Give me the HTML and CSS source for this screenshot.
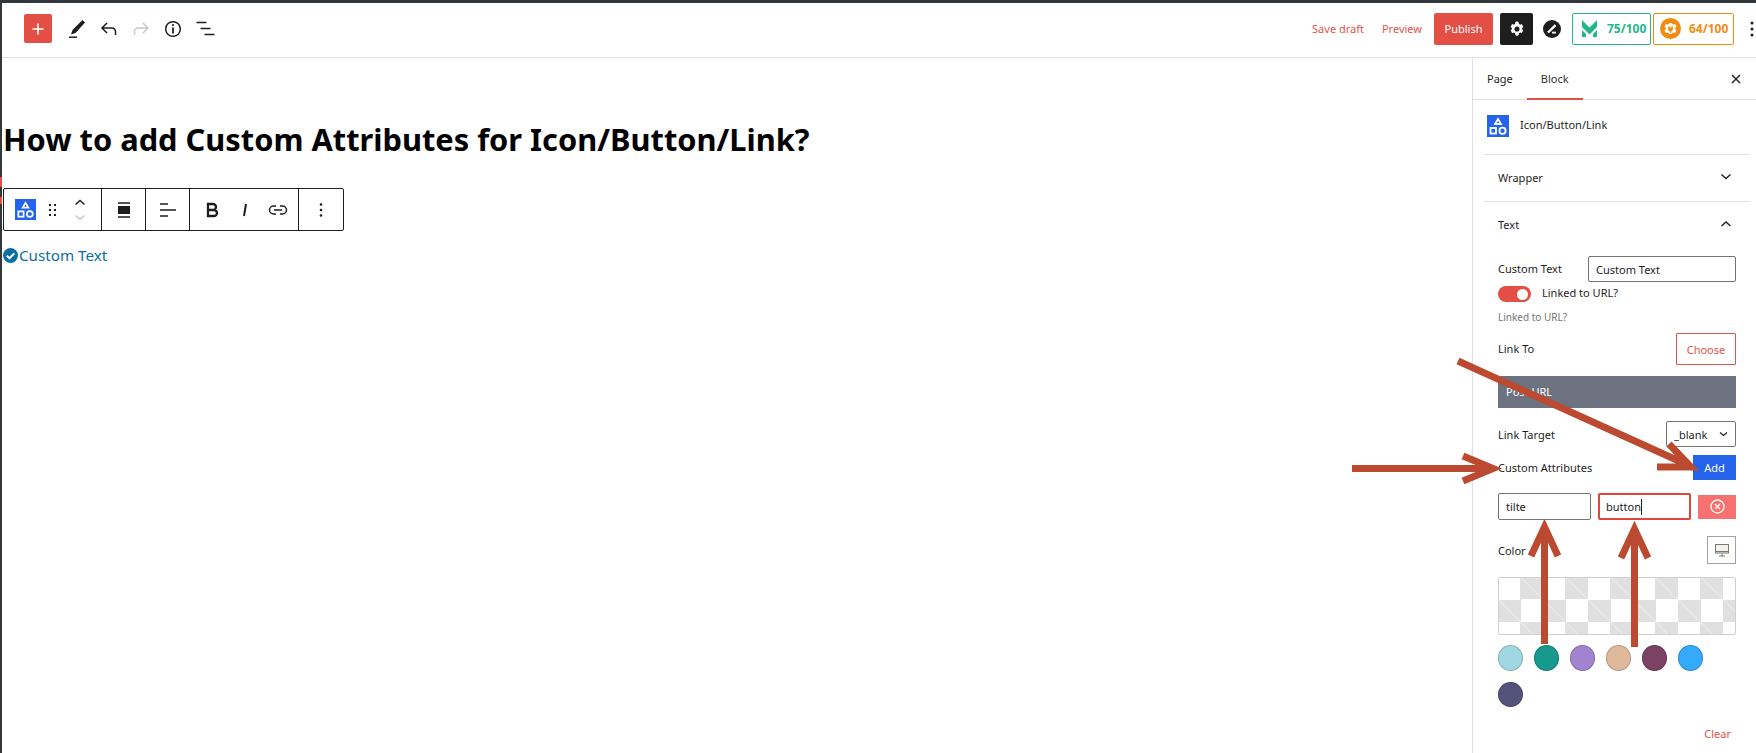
FILE: index.html
```html
<!DOCTYPE html>
<html lang="en">
<head>
<meta charset="utf-8">
<title>How to add Custom Attributes</title>
<link rel="stylesheet" href="styles.css">
</head>
<body>
<div class="topline"></div>
<div class="app">
<header class="bar">
  <div class="bar-left">
    <button class="add"><svg width="16" height="16" viewBox="0 0 16 16"><path d="M8 2.500v11M2.500 8h11" stroke="#fff" stroke-width="1.600"/></svg></button>
    <svg class="ic" width="24" height="24" viewBox="0 0 24 24"><path d="M20 5.500l-2.600-2.600L7.500 13 6 17.500l4.500-1.500z" fill="#1e1e1e"/><path d="M4 20.200h8" stroke="#1e1e1e" stroke-width="1.500"/></svg>
    <svg class="ic" width="24" height="24" viewBox="0 0 24 24"><path d="M18.500 18v-3.500a3.500 3.500 0 0 0-3.500-3.500H5.500M10 6l-5 5 5 5" fill="none" stroke="#1e1e1e" stroke-width="1.500"/></svg>
    <svg class="ic" width="24" height="24" viewBox="0 0 24 24"><path d="M5.500 18v-3.500a3.500 3.500 0 0 1 3.500-3.500h9.500M14 6l5 5-5 5" fill="none" stroke="#c8c8c8" stroke-width="1.500"/></svg>
    <svg class="ic" width="24" height="24" viewBox="0 0 24 24"><circle cx="12" cy="12" r="7.300" fill="none" stroke="#1e1e1e" stroke-width="1.500"/><path d="M12 10.500V16.500" stroke="#1e1e1e" stroke-width="1.800"/><circle cx="12" cy="8" r="1.100" fill="#1e1e1e"/></svg>
    <svg class="ic lastic" width="24" height="24" viewBox="0 0 24 24"><path d="M3 6h10M7 12h10M11 18h10" stroke="#1e1e1e" stroke-width="1.600" transform="translate(-.5 -.5)"/></svg>
  </div>
  <div class="bar-right">
    <a class="link draft">Save draft</a>
    <a class="link preview">Preview</a>
    <button class="publish">Publish</button>
    <button class="gear"><svg width="18" height="18" viewBox="0 0 24 24"><path fill="#fff" fill-rule="evenodd" d="M12 1.800l2.200 1.300 .4 2.200 1.600.9 2.100-.8 2.200 3.800-1.700 1.400v1.800l1.700 1.400-2.200 3.800-2.100-.8-1.600.9-.4 2.200-2.200 1.300-2.200-1.300-.4-2.200-1.600-.9-2.100.8-2.200-3.800 1.700-1.400v-1.800L3.300 9.200l2.200-3.800 2.100.8 1.600-.9.4-2.200zM12 8.600a3.400 3.400 0 1 0 0 6.800 3.400 3.400 0 0 0 0-6.800z"/></svg></button>
    <svg class="zlogo" width="18" height="18" viewBox="0 0 18 18"><circle cx="9" cy="9" r="9" fill="#1e1e1e"/><path d="M5 12.500L12.500 5.200" stroke="#fff" stroke-width="2.400"/><path d="M9 12.600h4" stroke="#fff" stroke-width="1.800"/></svg>
    <button class="badge green"><svg width="17" height="17" viewBox="0 0 17 17"><path fill="#22b88a" d="M1 0l7.500 7.500L16 0v7l-7.500 7.500L1 7zM1 10l4 4v3H1zM16 10v7h-4v-3z"/></svg><span>75/100</span></button>
    <button class="badge orange"><svg width="21" height="21" viewBox="0 0 21 21"><circle cx="10.500" cy="10.500" r="10.500" fill="#f28c0f"/><path fill="#fff" d="M4.500 8.500L6 6l2 .8L9.500 5h2L13 6.800l2-.8 1.500 2.500-1.500 1.500.3 1.200 1.200 1.300L15 15l-2-.5-1.500 1.500h-2L8 14.500 6 15l-1.500-2.500 1.200-1.300.3-1.200z"/><path fill="#f28c0f" d="M8.500 8h1v1.500h2V8h1v1.500h.5v1.500a2.500 2.500 0 0 1-2 2.400V15h-1v-1.600A2.500 2.500 0 0 1 8 11V9.500h.5z"/></svg><span>64/100</span></button>
    <svg class="kebab" width="4" height="16" viewBox="0 0 4 16"><circle cx="2" cy="2" r="1.500" fill="#1e1e1e"/><circle cx="2" cy="8" r="1.500" fill="#1e1e1e"/><circle cx="2" cy="14" r="1.500" fill="#1e1e1e"/></svg>
  </div>
</header>
<div class="main">
  <main class="content">
    <h1 class="title">How to add Custom Attributes for Icon/Button/Link?</h1>
    <div class="toolbar">
      <div class="tgroup tg1">
        <svg class="blockicon" width="21" height="21" viewBox="0 0 22 22"><rect width="22" height="22" fill="#2563eb"/><path d="M11 4l3 5H8z" fill="none" stroke="#fff" stroke-width="1.800"/><rect x="3.500" y="13" width="5.500" height="5.500" fill="none" stroke="#fff" stroke-width="1.800"/><circle cx="15.500" cy="15.700" r="3.100" fill="none" stroke="#fff" stroke-width="1.800"/></svg>
        <svg width="8" height="14" viewBox="0 0 8 14"><g fill="#1e1e1e"><rect x="0" y="1" width="2" height="2"/><rect x="5" y="1" width="2" height="2"/><rect x="0" y="6" width="2" height="2"/><rect x="5" y="6" width="2" height="2"/><rect x="0" y="11" width="2" height="2"/><rect x="5" y="11" width="2" height="2"/></g></svg>
        <svg width="12" height="24" viewBox="0 0 12 24"><path d="M1.500 6.500L6 2.500l4.500 4" fill="none" stroke="#1e1e1e" stroke-width="1.500"/><path d="M1.500 17.500l4.500 4 4.500-4" fill="none" stroke="#c8c8c8" stroke-width="1.500"/></svg>
      </div>
      <div class="tgroup tg2">
        <svg width="14" height="16" viewBox="0 0 14 16"><path d="M1 1h12M1 15h12" stroke="#1e1e1e" stroke-width="1.500"/><rect x="1" y="4" width="12" height="8" fill="#1e1e1e"/></svg>
      </div>
      <div class="tgroup tg2">
        <svg width="16" height="14" viewBox="0 0 16 14"><path d="M0 1h8M0 7h16M0 13h8" stroke="#1e1e1e" stroke-width="1.500"/></svg>
      </div>
      <div class="tgroup tg3">
        <svg width="24" height="24" viewBox="0 0 24 24"><path d="M8 6h5a3 3 0 0 1 0 6H8zM8 12h6a3 3 0 0 1 0 6H8z" fill="none" stroke="#1e1e1e" stroke-width="2.300"/></svg>
        <svg width="24" height="24" viewBox="0 0 24 24"><path d="M13 6l-2 12" stroke="#1e1e1e" stroke-width="2"/></svg>
        <svg width="24" height="24" viewBox="0 0 24 24"><path d="M10 8H7.500a4 4 0 0 0 0 8H10M14 8h2.500a4 4 0 0 1 0 8H14M8 12h8" fill="none" stroke="#1e1e1e" stroke-width="1.500"/></svg>
      </div>
      <div class="tgroup tg4">
        <svg width="4" height="14" viewBox="0 0 4 14"><circle cx="2" cy="1.500" r="1.300" fill="#1e1e1e"/><circle cx="2" cy="7" r="1.300" fill="#1e1e1e"/><circle cx="2" cy="12.500" r="1.300" fill="#1e1e1e"/></svg>
      </div>
    </div>
    <div class="customtext">
      <svg width="15" height="15" viewBox="0 0 15 15"><circle cx="7.500" cy="7.500" r="7.500" fill="#0b6fa3"/><path d="M3.800 7.600l2.700 2.700 4.800-4.900" fill="none" stroke="#fff" stroke-width="2"/></svg>
      <a>Custom Text</a>
    </div>
  </main>
  <aside class="side">
    <div class="tabs">
      <span class="tab">Page</span>
      <span class="tab active">Block</span>
      <svg class="close" width="12" height="12" viewBox="0 0 12 12"><path d="M2 2l8 8M10 2l-8 8" stroke="#1e1e1e" stroke-width="1.400"/></svg>
    </div>
    <div class="blockcard">
      <svg width="22" height="22" viewBox="0 0 22 22"><rect width="22" height="22" fill="#2563eb"/><path d="M11 4l3 5H8z" fill="none" stroke="#fff" stroke-width="1.800"/><rect x="3.500" y="13" width="5.500" height="5.500" fill="none" stroke="#fff" stroke-width="1.800"/><circle cx="15.500" cy="15.700" r="3.100" fill="none" stroke="#fff" stroke-width="1.800"/></svg>
      <span>Icon/Button/Link</span>
    </div>
    <div class="panelhead">
      <span>Wrapper</span>
      <svg width="12" height="8" viewBox="0 0 12 8"><path d="M1.500 1.500L6 5.500l4.500-4" fill="none" stroke="#1e1e1e" stroke-width="1.400"/></svg>
    </div>
    <div class="panelhead open">
      <span>Text</span>
      <svg width="12" height="8" viewBox="0 0 12 8"><path d="M1.500 6L6 2l4.500 4" fill="none" stroke="#1e1e1e" stroke-width="1.400"/></svg>
    </div>
    <div class="panelbody">
      <div class="row r-text">
        <label>Custom Text</label>
        <div class="input wide">Custom Text</div>
      </div>
      <div class="toggle-row">
        <span class="toggle"><i></i></span>
        <span class="toggle-label">Linked to URL?</span>
      </div>
      <p class="help">Linked to URL?</p>
      <div class="row r-link">
        <label>Link To</label>
        <button class="choose">Choose</button>
      </div>
      <div class="posturl">Post URL</div>
      <div class="row r-target">
        <label>Link Target</label>
        <div class="select">_blank<svg width="9" height="6" viewBox="0 0 9 6"><path d="M1 1.500l3.500 3 3.500-3" fill="none" stroke="#1e1e1e" stroke-width="1.200"/></svg></div>
      </div>
      <div class="row r-attr">
        <label>Custom Attributes</label>
        <button class="addbtn">Add</button>
      </div>
      <div class="attrs">
        <div class="input attr">tilte</div>
        <div class="input attr focus">button<i class="caret"></i></div>
        <button class="remove"><svg width="15" height="15" viewBox="0 0 15 15"><circle cx="7.500" cy="7.500" r="6.500" fill="none" stroke="#fff" stroke-width="1.300"/><path d="M5 5l5 5M10 5l-5 5" stroke="#fff" stroke-width="1.300"/></svg></button>
      </div>
      <div class="row r-color">
        <label>Color</label>
        <button class="device"><svg width="14" height="13" viewBox="0 0 14 13"><rect x=".5" y=".5" width="13" height="8.500" fill="#f7f1ea" stroke="#777" stroke-width="1"/><path d="M.5 7.500h13M4 12h6M7 9.500V12" stroke="#777" stroke-width="1"/></svg></button>
      </div>
      <div class="picker"></div>
      <div class="swatches">
        <span class="sw s1"></span><span class="sw s2"></span><span class="sw s3"></span><span class="sw s4"></span><span class="sw s5"></span><span class="sw s6"></span><span class="sw s7"></span>
      </div>
      <div class="clear">Clear</div>
    </div>
  </aside>
</div>
</div>
<span class="redmark m1"></span>
<span class="redmark m2"></span>
<svg class="arrows" width="1756" height="753" viewBox="0 0 1756 753" fill="none" stroke="#bb4a30" stroke-width="7">
  <path d="M1458 361L1690 466M1669 444L1691 467L1657 467"/>
  <path d="M1352 468.500H1492M1463 456L1493 468.500L1463 481"/>
  <path d="M1544.500 644V526M1531 556L1544.500 527L1558 556"/>
  <path d="M1634.500 647V529M1621 558L1634.500 529L1648 558"/>
</svg>
</body>
</html>
```
FILE: styles.css
```css
* { box-sizing: border-box; }
html, body { margin: 0; height: 753px; overflow: hidden; background: #fff; }
body { font-family: "Noto Sans", "Open Sans", sans-serif; font-size: 11px; color: #1e1e1e; position: relative; }
button { font-family: inherit; border: 0; padding: 0; margin: 0; }
svg { display: block; flex: none; }
.topline { height: 3px; background: #32373c; }
.app { height: 750px; border-left: 2px solid #32373c; display: flex; flex-direction: column; }
.bar { height: 55px; flex: none; border-bottom: 1px solid #e0e0e0; display: flex; align-items: center; justify-content: space-between; padding: 0 0 3px 22px; }
.bar-left { display: flex; align-items: center; gap: 8px; }
.add { width: 28px; height: 29px; background: #e34f45; border-radius: 2px; display: flex; align-items: center; justify-content: center; margin-right: 5px; }
.lastic { margin-left: 1px; }
.bar-right { display: flex; align-items: center; height: 32px; }
.link { color: #e2544b; font-size: 11px; }
.draft { margin-right: 18px; }
.preview { margin-right: 12px; }
.publish { width: 59px; height: 32px; background: #e34f45; color: #fff; font-size: 11px; border-radius: 2px; margin-right: 7px; }
.gear { width: 33px; height: 32px; background: #1e1e1e; border-radius: 2px; display: flex; align-items: center; justify-content: center; margin-right: 10px; }
.zlogo { margin-right: 11px; }
.badge { height: 32px; background: #fff; border-radius: 2px; display: flex; align-items: center; font-size: 12px; font-weight: 700; }
.badge.green { width: 79px; border: 1px solid #22b88a; color: #22b88a; padding-left: 8px; gap: 9px; margin-right: 2px; }
.badge.orange { width: 81px; border: 1px solid #f28c0f; color: #f28c0f; padding-left: 6px; gap: 8px; margin-right: 16px; }
.kebab { margin-right: 2px; }
.main { flex: 1; display: flex; min-height: 0; }
.content { flex: 1; padding: 0 0 0 1px; }
.title { margin: 59px 0 0; font-size: 30.800px; line-height: 44px; font-weight: 700; color: #000; }
.toolbar { margin: 27px 0 0; width: 341px; height: 43px; border: 1px solid #1e1e1e; border-radius: 2px; display: flex; background: #fff; }
.tgroup { height: 100%; display: flex; align-items: center; border-right: 1px solid #1e1e1e; }
.tg1 { width: 98px; padding-left: 11px; }
.tg1 svg:nth-child(2) { margin-left: 13px; }
.tg1 svg:nth-child(3) { margin-left: 17px; }
.tg2 { width: 44px; justify-content: center; }
.tg3 { width: 109px; padding-left: 10px; gap: 9px; }
.tg4 { flex: 1; border-right: 0; justify-content: center; }
.customtext { margin-top: 14px; display: flex; align-items: center; gap: 1px; font-size: 15.200px; line-height: 20px; color: #0b6fa3; }
.side { width: 284px; flex: none; border-left: 1px solid #e0e0e0; padding: 0 0 0 11px; }
.tabs { height: 42px; display: flex; align-items: center; margin: 0 0 0 -11px; border-bottom: 1px solid #e0e0e0; position: relative; }
.tab { height: 41px; line-height: 41px; font-size: 11px; }
.tab:first-child { margin-left: 14px; margin-right: 28px; }
.tab.active { position: relative; color: #333; }
.tab.active::after { content: ""; position: absolute; left: -14px; right: -14px; bottom: -1px; height: 2px; background: #e34f45; }
.close { margin-left: auto; margin-right: 14px; }
.blockcard { height: 55px; display: flex; align-items: center; gap: 11px; padding: 0 0 0 3px; border-bottom: 1px solid #e0e0e0; margin-right: 6px; font-size: 11px; }
.blockcard span { margin-top: -5px; }
.blockcard svg { margin-top: -3px; }
.panelhead { height: 47px; display: flex; align-items: center; justify-content: space-between; padding: 0 18px 2px 14px; border-bottom: 1px solid #e0e0e0; margin-right: 6px; font-size: 11px; }
.panelhead.open { border-bottom: 0; height: 46px; }
.panelbody { padding: 8px 20px 0 14px; }
.row { display: flex; align-items: center; justify-content: space-between; }
.input { border: 1px solid #757575; border-radius: 2px; display: flex; align-items: center; padding-left: 7px; background: #fff; }
.wide { width: 148px; height: 26px; }
.r-text { height: 26px; }
.r-text label, .r-link label { padding-bottom: 2px; }
.toggle-row { display: flex; align-items: center; gap: 11px; height: 16px; margin-top: 4px; }
.toggle { width: 33px; height: 16px; border-radius: 8px; background: #e34f45; position: relative; }
.toggle i { position: absolute; right: 3px; top: 2.500px; width: 11px; height: 11px; border-radius: 50%; background: #fff; }
.toggle-label { padding-bottom: 3px; }
.help { margin: 7px 0 0; font-size: 10px; line-height: 16px; color: #757575; }
.r-link { margin-top: 8px; height: 32px; }
.choose { width: 60px; height: 32px; background: #fff; border: 1px solid #e2544b; color: #e2544b; font-size: 11px; border-radius: 1px; }
.posturl { margin-top: 11px; height: 32px; background: #6c7280; color: #fff; line-height: 32px; padding-left: 8px; }
.r-target { margin-top: 13px; height: 26px; }
.select { width: 70px; height: 26px; border: 1px solid #757575; border-radius: 2px; display: flex; align-items: center; justify-content: space-between; padding: 0 7px 0 7px; }
.r-attr { margin-top: 8px; height: 25px; }
.addbtn { width: 43px; height: 25px; background: #2563eb; color: #fff; font-size: 11px; }
.attrs { margin-top: 13px; height: 27px; display: flex; align-items: center; }
.attr { width: 93px; height: 27px; margin-right: 7px; }
.attr.focus { border: 2px solid #e0443c; padding-left: 6px; }
.caret { width: 1px; height: 16px; background: #1e1e1e; }
.remove { width: 38px; height: 24px; background: #f87171; display: flex; align-items: center; justify-content: center; }
.r-color { margin-top: 16px; height: 28px; }
.device { width: 29px; height: 28px; background: #fff; border: 1px solid #9ca3af; display: flex; align-items: center; justify-content: center; }
.picker { margin-top: 13px; height: 58px; border: 1px solid #d0d0d0; border-radius: 2px; background-color: #fff; background-image: linear-gradient(to top right, transparent 49.500%, rgba(255,255,255,.5) 50%, transparent 50.500%), repeating-conic-gradient(#e0e0e0 0 25%, #fff 0 50%); background-size: 22.500px 22.500px, 45px 45px; background-position: -1px -1px; }
.swatches { margin-top: 10px; display: flex; flex-wrap: wrap; gap: 11px; width: 220px; }
.sw { width: 25px; height: 25.500px; border-radius: 50%; border: 1px solid rgba(0,0,0,.18); }
.s1 { background: #a0d8e2; }
.s2 { background: #17998c; }
.s3 { background: #a183cf; }
.s4 { background: #deb99c; }
.s5 { background: #7a4263; }
.s6 { background: #35a9fc; }
.s7 { background: #535379; }
.clear { margin-top: 19px; text-align: right; color: #e2544b; font-size: 11px; padding-right: 5px; line-height: 16px; }
.redmark { position: absolute; left: 0; width: 2px; background: #e34f45; }
.m1 { top: 177px; height: 10px; }
.m2 { top: 197px; height: 7px; }
.arrows { position: absolute; left: 0; top: 0; pointer-events: none; }
```
